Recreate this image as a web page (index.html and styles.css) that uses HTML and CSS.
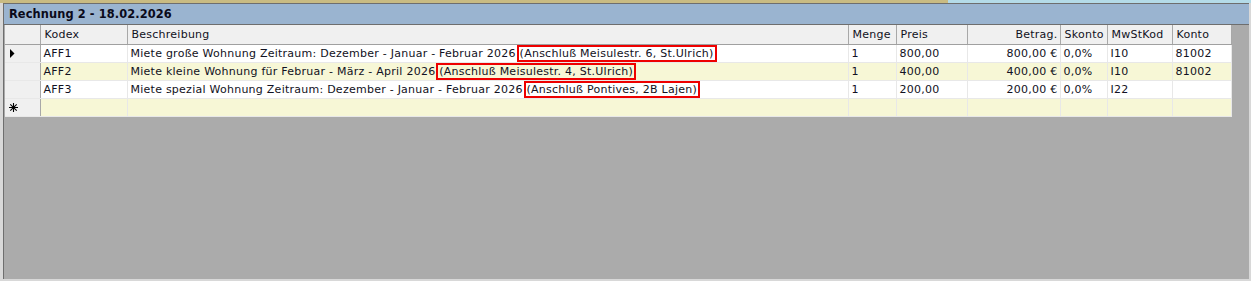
FILE: index.html
```html
<!DOCTYPE html>
<html>
<head>
    <link rel="stylesheet" href="styles.css">
</head>
<body>
    <div class="topstrip">
        <div class="strip-left"></div>
        <div class="strip-right"></div>
    </div>
    <div class="frame">
        <div class="panel">
            <div class="title">Rechnung 2 - 18.02.2026</div>
            <div class="grid-area">
                <table class="grid">
                    <colgroup>
                        <col style="width:35px">
                        <col style="width:87px">
                        <col style="width:721px">
                        <col style="width:48px">
                        <col style="width:71px">
                        <col style="width:93px">
                        <col style="width:47px">
                        <col style="width:65px">
                        <col style="width:59px">
                    </colgroup>
                    <thead>
                        <tr>
                            <th class="rh"></th>
                            <th>Kodex</th>
                            <th>Beschreibung</th>
                            <th>Menge</th>
                            <th>Preis</th>
                            <th class="num">Betrag.</th>
                            <th>Skonto</th>
                            <th>MwStKod</th>
                            <th>Konto</th>
                        </tr>
                    </thead>
                    <tbody>
                        <tr>
                            <td class="rh"><svg class="glyph" width="9" height="9" viewBox="0 0 9 9"><path d="M1 0 L5.5 4.5 L1 9 Z" fill="#000"/></svg></td>
                            <td>AFF1</td>
                            <td>Miete große Wohnung Zeitraum: Dezember - Januar - Februar 2026 <span class="mark">(Anschluß Meisulestr. 6, St.Ulrich)</span></td>
                            <td>1</td>
                            <td>800,00</td>
                            <td class="num">800,00 €</td>
                            <td>0,0%</td>
                            <td>I10</td>
                            <td>81002</td>
                        </tr>
                        <tr class="alt">
                            <td class="rh"></td>
                            <td>AFF2</td>
                            <td>Miete kleine Wohnung für Februar - März - April 2026 <span class="mark">(Anschluß Meisulestr. 4, St.Ulrich)</span></td>
                            <td>1</td>
                            <td>400,00</td>
                            <td class="num">400,00 €</td>
                            <td>0,0%</td>
                            <td>I10</td>
                            <td>81002</td>
                        </tr>
                        <tr>
                            <td class="rh"></td>
                            <td>AFF3</td>
                            <td>Miete spezial Wohnung Zeitraum: Dezember - Januar - Februar 2026 <span class="mark">(Anschluß Pontives, 2B Lajen)</span></td>
                            <td>1</td>
                            <td>200,00</td>
                            <td class="num">200,00 €</td>
                            <td>0,0%</td>
                            <td>I22</td>
                            <td></td>
                        </tr>
                        <tr class="alt">
                            <td class="rh"><svg class="glyph" width="9" height="9" viewBox="0 0 9 9"><path d="M4.5 0 V9 M0 4.5 H9 M1.3 1.3 L7.7 7.7 M7.7 1.3 L1.3 7.7" stroke="#000" stroke-width="1.1" fill="none"/></svg></td>
                            <td></td>
                            <td></td>
                            <td></td>
                            <td></td>
                            <td></td>
                            <td></td>
                            <td></td>
                            <td></td>
                        </tr>
                    </tbody>
                </table>
            </div>
        </div>
    </div>
</body>
</html>
```

FILE: styles.css
```css
body {
    margin: 0;
    width: 1251px;
    height: 281px;
    overflow: hidden;
    background: #d8d8d8;
    font-family: "DejaVu Sans", Verdana, sans-serif;
    font-size: 11px;
    color: #111122;
}

.topstrip {
    display: flex;
    height: 3px;
}

.strip-left {
    width: 948px;
    background: #c9bb82;
}

.strip-right {
    flex: 1;
    background: #b4dbe8;
}

.frame {
    padding: 0 2px 3px 3px;
}

.panel {
    height: 275px;
    border-top: 1px solid #6e6e6e;
    border-left: 1px solid #6e6e6e;
    background: #ababab;
    display: flex;
    flex-direction: column;
}

.title {
    height: 20px;
    line-height: 21px;
    padding-left: 5px;
    background: #9ab4d0;
    border-bottom: 1px solid #6e6e6e;
    font-weight: bold;
    font-size: 11.4px;
    letter-spacing: 0.1px;
    color: #0a0a1a;
}

.grid-area {
    padding-left: 1px;
}

.grid {
    border-collapse: collapse;
    table-layout: fixed;
    width: 1226px;
    border-bottom: 1px solid #8a8a8a;
    letter-spacing: 0.25px;
}

.grid th {
    height: 19px;
    padding: 0 0 0 4px;
    text-align: left;
    font-weight: normal;
    background: #f0f0f0;
    border-right: 1px solid #a8a8a8;
    border-bottom: 1px solid #a0a0a0;
    white-space: nowrap;
    overflow: hidden;
}

.grid td {
    height: 17px;
    padding: 0 0 0 3px;
    background: #ffffff;
    border-right: 1px solid #e8e8e8;
    border-bottom: 1px solid #e8e8e8;
    white-space: nowrap;
    overflow: hidden;
    line-height: 14px;
    vertical-align: middle;
}

.grid tr.alt td {
    background: #f7f7d6;
}

.grid .rh,
.grid tr.alt td.rh {
    background: #f0f0f0;
    border-right: 1px solid #a8a8a8;
    padding-left: 4px;
}

.grid th.num,
.grid td.num {
    text-align: right;
    padding: 0 2px 0 0;
}

.glyph {
    display: block;
}

.mark {
    display: inline-block;
    border: 2px solid #ee0000;
    padding: 0 1px;
    margin: -1px 0 -1px -3px;
    line-height: 13px;
    vertical-align: middle;
}
```
